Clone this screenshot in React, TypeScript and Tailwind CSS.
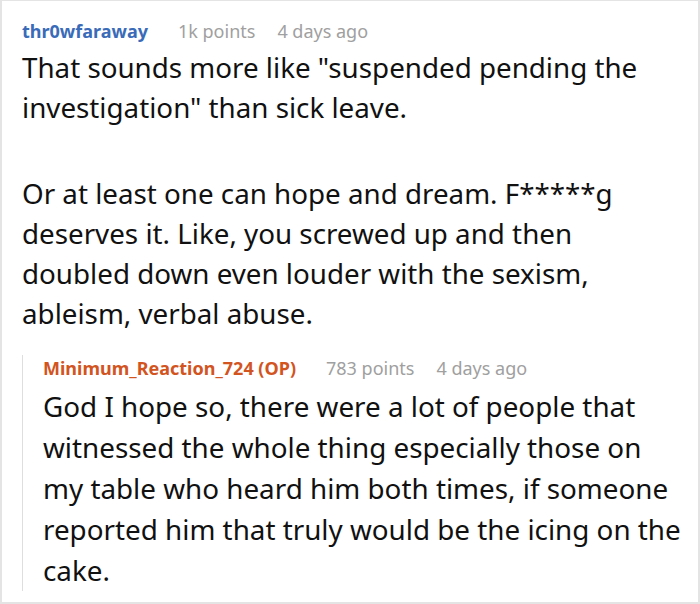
export default function App() {
  return (
    <div className="w-[700px] h-[604px] bg-white border-x-2 border-t border-b-2 border-[#e4e4e4] font-['Noto_Sans',sans-serif] overflow-hidden">
      <div className="pl-[20px] pr-4 pt-[17px]">
        <div className="flex items-baseline gap-[30px] text-[18px] leading-[26px]">
          <span className="font-bold text-[#3a6bb9]">thr0wfaraway</span>
          <span className="text-[#a0a0a0]">1k points</span>
          <span className="text-[#a0a0a0] -ml-[8px]">4 days ago</span>
        </div>
        <div className="text-[27.75px] leading-[40px] text-[#111] mt-[3px]">
          <p>That sounds more like "suspended pending the investigation" than sick leave.</p>
          <p className="mt-[46px]">
            Or at least one can hope and dream. F*****g deserves it. Like, you screwed up and then doubled down even louder with the sexism, ableism, verbal abuse.
          </p>
        </div>
        <div className="mt-[22px] border-l border-[#dedede] pl-[20px]">
          <div className="flex items-baseline gap-[30px] text-[18px] leading-[26px]">
            <span className="font-bold text-[#d2541f]">Minimum_Reaction_724 (OP)</span>
            <span className="text-[#a0a0a0]">783 points</span>
            <span className="text-[#a0a0a0] -ml-[8px]">4 days ago</span>
          </div>
          <p className="text-[27.8px] leading-[41px] text-[#111] mt-[5px]">
            God I hope so, there were a lot of people that witnessed the whole thing especially those on my table who heard him both times, if someone reported him that truly would be the icing on the cake.
          </p>
        </div>
      </div>
    </div>
  );
}
